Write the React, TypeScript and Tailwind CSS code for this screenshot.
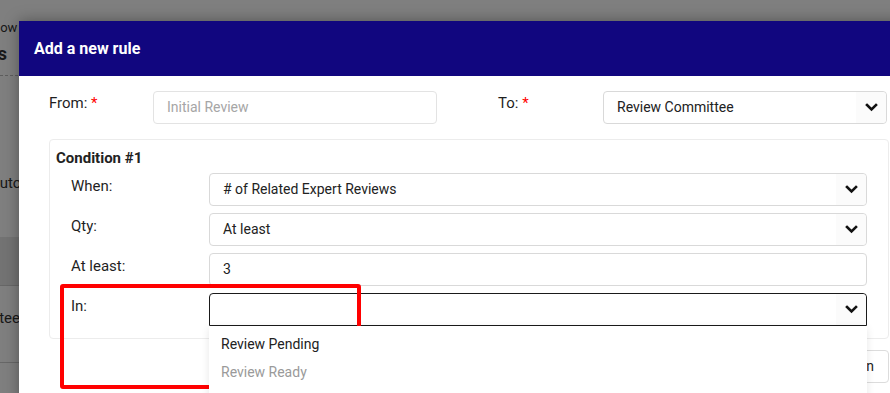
import React from 'react';

function Chevron() {
  return (
    <svg width="13" height="9" viewBox="0 0 13 9" fill="none">
      <path d="M2 2 L6.5 6.5 L11 2" stroke="#111" strokeWidth="2.6" strokeLinecap="square" />
    </svg>
  );
}

function SelectBox({ value, focused = false, className = '' }: { value: string; focused?: boolean; className?: string }) {
  return (
    <div
      className={`relative flex h-[33px] items-center rounded-[4px] border bg-white ${
        focused ? 'border-[#1a1a1a] rounded-b-none' : 'border-[#d9d9d9]'
      } ${className}`}
    >
      <span className="flex-1 truncate pl-[13px] text-[14px] text-[#222]">{value}</span>
      <span className="flex h-full w-[30px] items-center justify-center rounded-r-[4px] bg-[#fbfbfb]">
        <Chevron />
      </span>
    </div>
  );
}

function ConditionRow({ label, children }: { label: string; children: React.ReactNode }) {
  return (
    <div className="flex items-start">
      <div className="w-[138px] pt-[2px] text-[15px] text-[#1f1f1f]">{label}</div>
      <div className="flex-1">{children}</div>
    </div>
  );
}

export default function App() {
  return (
    <div
      className="relative h-[393px] w-[890px] overflow-hidden bg-white"
      style={{ fontFamily: 'Roboto, "Liberation Sans", sans-serif' }}
    >
      {/* page behind the modal */}
      <div className="flex flex-col text-[#333]">
        <div className="-ml-[37px] mt-[19px] h-[18px] whitespace-nowrap text-[13px] leading-[18px]">Workflow</div>
        <div className="-ml-[84px] mt-[4px] h-[26px] whitespace-nowrap text-[18px] font-bold leading-[26px]">Transitions</div>
        <div className="mt-[8px] border-t border-dashed border-[#bbb]" />
        <div className="-ml-[10px] mt-[96px] h-[22px] whitespace-nowrap text-[15px] leading-[22px]">Auto Approve</div>
        <div className="mt-[43px] h-[48px] bg-[#e6e6e6]" />
        <div className="border-t border-[#cfcfcf]" />
        <div className="-ml-[105px] mt-[21px] h-[22px] whitespace-nowrap text-[15px] leading-[22px]">Review Committee</div>
        <div className="mt-[33px] border-t border-[#cfcfcf]" />
      </div>
      <div className="absolute inset-0 bg-black/50" />

      {/* modal */}
      <div className="absolute left-[19px] top-[21px] w-[900px] bg-white shadow-[0_0_14px_rgba(0,0,0,0.35)]">
        <div className="flex h-[55px] items-center bg-[#11067f] px-[15px] text-[16px] font-bold text-white">
          Add a new rule
        </div>
        <div className="px-[30px] pt-[15px]">
          <div className="flex gap-[61px]">
            <div className="flex w-[388px] items-start">
              <div className="w-[104px] pt-[1px] text-[15px] text-[#1f1f1f]">
                From: <span className="text-[#ff0000]">*</span>
              </div>
              <div className="flex h-[33px] flex-1 items-center rounded-[4px] border border-[#e3e3e3] px-[13px] text-[14px] text-[#a6a6a6]">
                Initial Review
              </div>
            </div>
            <div className="flex w-[389px] items-start">
              <div className="w-[105px] pt-[1px] text-[15px] text-[#1f1f1f]">
                To: <span className="text-[#ff0000]">*</span>
              </div>
              <SelectBox value="Review Committee" className="flex-1" />
            </div>
          </div>

          <div className="mt-[15px] rounded-[4px] border border-[#ececec] pb-[12px] pt-[8px]">
            <div className="pl-[6px] text-[15px] font-bold leading-[20px] text-[#222]">Condition #1</div>
            <div className="mt-[5px] flex flex-col gap-[7px] px-[21px]">
              <ConditionRow label="When:">
                <SelectBox value="# of Related Expert Reviews" />
              </ConditionRow>
              <ConditionRow label="Qty:">
                <SelectBox value="At least" />
              </ConditionRow>
              <ConditionRow label="At least:">
                <div className="flex h-[33px] items-center rounded-[4px] border border-[#d9d9d9] px-[13px] text-[14px] text-[#222]">
                  3
                </div>
              </ConditionRow>
              <ConditionRow label="In:">
                <div className="relative">
                  <SelectBox value="" focused />
                  <div className="absolute left-0 right-0 top-full z-10 bg-white pb-[40px] pt-[4px] shadow-[0_2px_8px_rgba(0,0,0,0.1)]">
                    <div className="flex h-[28px] items-center px-[12px] text-[14px] text-[#222]">Review Pending</div>
                    <div className="flex h-[28px] items-center px-[12px] text-[14px] text-[#9a9a9a]">Review Ready</div>
                  </div>
                </div>
              </ConditionRow>
            </div>
          </div>

          <div className="mt-[11px] flex justify-end">
            <div className="flex h-[33px] items-center rounded-[4px] border border-[#dcdcdc] px-[14px] text-[14px] text-[#222]">
              Add Condition
            </div>
          </div>
          <div className="h-[20px]" />
        </div>
      </div>

      {/* annotation highlight */}
      <div className="absolute left-[60px] top-[284px] h-[105px] w-[301px] rounded-[3px] border-4 border-[#ff0000]" />
    </div>
  );
}
